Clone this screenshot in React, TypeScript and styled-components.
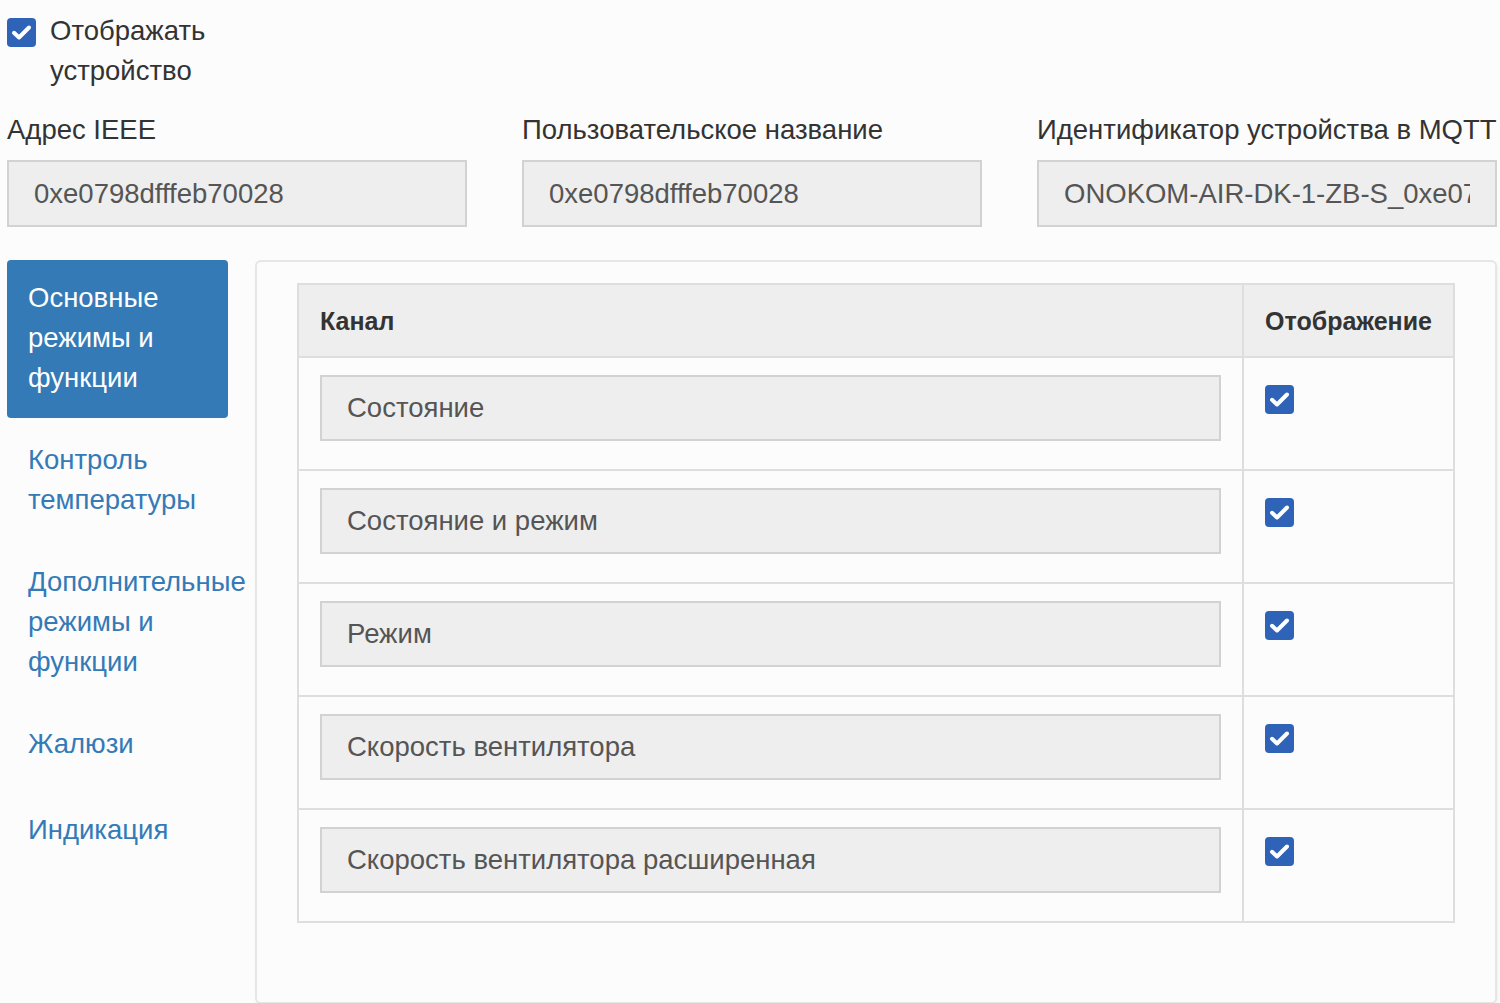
import React from "react";
import styled, { createGlobalStyle } from "styled-components";

const Global = createGlobalStyle`
  html, body { margin: 0; padding: 0; background: #fcfcfc; }
  body { font-family: "Liberation Sans", Arial, sans-serif; font-size: 27.5px; line-height: 40px; color: #333; }
  * { box-sizing: border-box; }
`;

const Page = styled.div`
  padding: 11px 3px 0 7px;
  height: 1003px;
  overflow: hidden;
`;

const CheckRow = styled.label`
  display: flex;
  align-items: flex-start;
  gap: 14px;
`;

const Box = styled.span<{ $mt?: number }>`
  flex: none;
  width: 29px;
  height: 29px;
  margin-top: ${(p) => p.$mt ?? 7}px;
  border-radius: 4px;
  background: #2f63b7;
  display: flex;
  align-items: center;
  justify-content: center;
`;

const CheckText = styled.span`
  max-width: 190px;
  color: #333;
`;

const Fields = styled.div`
  display: grid;
  grid-template-columns: repeat(3, 460px);
  column-gap: 55px;
  margin-top: 19px;
`;

const Field = styled.div`
  display: flex;
  flex-direction: column;
  gap: 10px;
`;

const Label = styled.div`
  color: #333;
  white-space: nowrap;
`;

const TextInput = styled.input<{ $h?: number }>`
  display: block;
  width: 100%;
  height: ${(p) => p.$h ?? 67}px;
  padding: 0 25px;
  border: 2px solid #d2d2d2;
  background: #eeeeee;
  color: #555;
  font-family: "Liberation Sans", Arial, sans-serif;
  font-size: 27.5px;
  outline: none;
  border-radius: 0;
`;

const Main = styled.div`
  display: flex;
  align-items: flex-start;
  gap: 27px;
  margin-top: 33px;
`;

const Nav = styled.nav`
  width: 221px;
  flex: none;
  display: flex;
  flex-direction: column;
  gap: 4px;
`;

const NavItem = styled.a<{ $active?: boolean }>`
  display: block;
  padding: 18px 21px 20px;
  border-radius: 4px;
  color: ${(p) => (p.$active ? "#fff" : "#337ab7")};
  background: ${(p) => (p.$active ? "#337ab7" : "transparent")};
  text-decoration: none;
  cursor: pointer;
  &:last-child { margin-top: 4px; }
`;

const Panel = styled.div`
  flex: 1;
  padding: 21px 40px 79px;
  border: 2px solid #e6e6e6;
  border-radius: 6px;
  background: #fcfcfc;
  box-shadow: 1px 2px 3px rgba(0, 0, 0, 0.05);
`;

const Table = styled.table`
  width: 100%;
  border-collapse: collapse;
  border: 2px solid #dedede;
`;

const HeadCell = styled.th<{ $w?: number }>`
  background: #eeeeee;
  text-align: left;
  font-weight: bold;
  font-size: 25px;
  color: #333;
  height: 73px;
  padding: 0 21px;
  border: 2px solid #dedede;
  white-space: nowrap;
  width: ${(p) => (p.$w ? `${p.$w}px` : "auto")};
`;

const Cell = styled.td`
  vertical-align: top;
  padding: 17px 21px 28px;
  border: 2px solid #dedede;
`;

const CheckIcon = () => (
  <svg width="21" height="17" viewBox="0 0 21 17">
    <path d="M3 8.8 L8 13.5 L18 3.5" fill="none" stroke="#fff" strokeWidth="4" strokeLinecap="round" strokeLinejoin="round" />
  </svg>
);

const channels = [
  "Состояние",
  "Состояние и режим",
  "Режим",
  "Скорость вентилятора",
  "Скорость вентилятора расширенная",
];

const navItems = [
  "Основные режимы и функции",
  "Контроль температуры",
  "Дополнительные режимы и функции",
  "Жалюзи",
  "Индикация",
];

export default function App() {
  return (
    <>
      <Global />
      <Page>
        <CheckRow>
          <Box>
            <CheckIcon />
          </Box>
          <CheckText>Отображать устройство</CheckText>
        </CheckRow>
        <Fields>
          <Field>
            <Label>Адрес IEEE</Label>
            <TextInput readOnly value="0xe0798dfffeb70028" />
          </Field>
          <Field>
            <Label>Пользовательское название</Label>
            <TextInput readOnly value="0xe0798dfffeb70028" />
          </Field>
          <Field>
            <Label>Идентификатор устройства в MQTT</Label>
            <TextInput readOnly value="ONOKOM-AIR-DK-1-ZB-S_0xe0798dfffeb70028" />
          </Field>
        </Fields>
        <Main>
          <Nav>
            {navItems.map((n, i) => (
              <NavItem key={n} $active={i === 0}>
                {n}
              </NavItem>
            ))}
          </Nav>
          <Panel>
            <Table>
              <thead>
                <tr>
                  <HeadCell>Канал</HeadCell>
                  <HeadCell $w={204}>Отображение</HeadCell>
                </tr>
              </thead>
              <tbody>
                {channels.map((c) => (
                  <tr key={c}>
                    <Cell>
                      <TextInput $h={66} readOnly value={c} />
                    </Cell>
                    <Cell>
                      <Box $mt={10}>
                        <CheckIcon />
                      </Box>
                    </Cell>
                  </tr>
                ))}
              </tbody>
            </Table>
          </Panel>
        </Main>
      </Page>
    </>
  );
}
